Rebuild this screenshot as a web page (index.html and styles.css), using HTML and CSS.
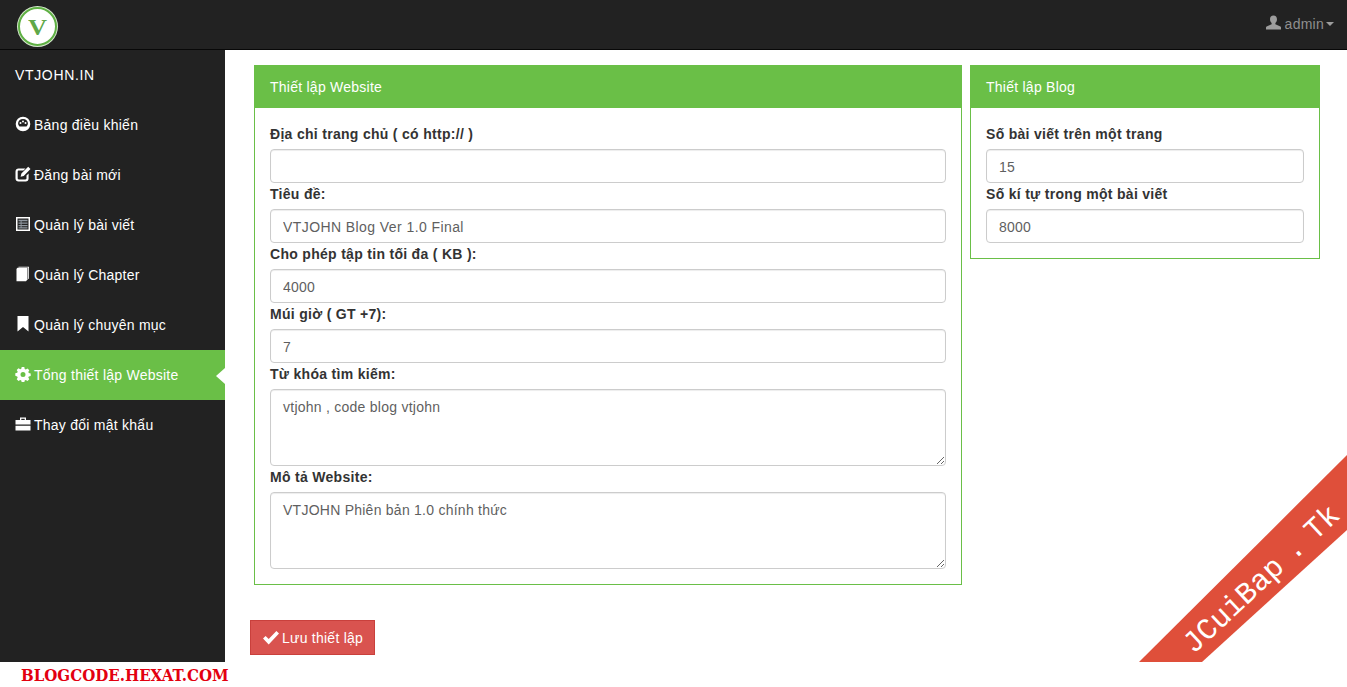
FILE: index.html
```html
<!DOCTYPE html>
<html lang="vi">
<head>
<meta charset="utf-8">
<title>Tổng thiết lập Website</title>
<link rel="stylesheet" href="styles.css">
</head>
<body>
<header class="topbar">
  <div class="logo"><span>V</span></div>
  <div class="user">
    <svg class="user-icon" viewBox="0 0 16 16"><path d="M8 0C5.600 0 4.300 1.700 4.300 4c0 1.700.7 3.200 1.700 4.100v1.300L.6 11.800C.2 12 0 12.400 0 12.800V15h16v-2.200c0-.4-.2-.8-.6-1L10 9.400V8.100C11 7.200 11.700 5.700 11.700 4 11.700 1.700 10.400 0 8 0z"/></svg>
    <span>admin</span><i class="caret"></i>
  </div>
</header>
<div class="shell">
  <nav class="sidebar">
    <a class="nav-item brand">VTJOHN.IN</a>
    <a class="nav-item">
      <svg class="ico" viewBox="0 0 16 16"><path fill-rule="evenodd" d="M8 .7a7.300 7.300 0 1 0 0 14.600A7.300 7.300 0 0 0 8 .7zM8 3c2.900 0 4.900 2 4.900 4.300 0 1.300-.6 2.400-1.400 3.200H4.500C3.700 9.700 3.100 8.600 3.100 7.300 3.100 5 5.100 3 8 3zM5.500 6a1 1 0 1 0 0 2 1 1 0 0 0 0-2zM8 4.600a1 1 0 1 0 0 2 1 1 0 0 0 0-2zM10.500 6a1 1 0 1 0 0 2 1 1 0 0 0 0-2z"/></svg>
      Bảng điều khiển</a>
    <a class="nav-item">
      <svg class="ico" viewBox="0 0 16 16"><path d="M3.500 2.500h7L8.400 4.600H3.800c-.7 0-1.100.4-1.100 1.100v6.600c0 .7.400 1.100 1.100 1.100h6.600c.7 0 1.100-.4 1.100-1.100V9.600l2.100-2.100v5c0 1.700-1.200 3-2.900 3H3.500c-1.700 0-3-1.300-3-3V5.500c0-1.700 1.300-3 3-3zM13.200.8l2.300 2.300-6.800 6.800-3.100.8.800-3.100z"/></svg>
      Đăng bài mới</a>
    <a class="nav-item">
      <svg class="ico" viewBox="0 0 16 16"><path fill-rule="evenodd" d="M1 1h14v14H1zM2.500 2.500v11h11v-11z"/><path class="grey" d="M3.500 3.800h9v1.400h-9zM3.500 6.500h9v1.300h-9zM3.500 9h9v1.300h-9zM3.500 11.300h9v1.300h-9zM5.600 3.800h1v8.800h-1z"/></svg>
      Quản lý bài viết</a>
    <a class="nav-item">
      <svg class="ico" viewBox="0 0 16 16"><path d="M3.500.8H14v12l-.8.2V1.600H3.500z" /><path d="M1.500 3.500C1.500 2.300 2.300 1.800 3.200 1.800h9.300v11.700L11 15.200H1.500z"/></svg>
      Quản lý Chapter</a>
    <a class="nav-item">
      <svg class="ico" viewBox="0 0 16 16"><path d="M2.500 0h11v15.500L8 11l-5.500 4.500z"/></svg>
      Quản lý chuyên mục</a>
    <a class="nav-item active">
      <svg class="ico" viewBox="0 0 16 16"><path fill-rule="evenodd" d="M6.700 1h2.600l.4 1.900 1.100.5 1.700-1 1.800 1.800-1 1.700.5 1.100 1.900.4v2.600l-1.900.4-.5 1.100 1 1.700-1.800 1.800-1.700-1-1.100.5-.4 1.900H6.700l-.4-1.900-1.100-.5-1.700 1-1.800-1.800 1-1.700-.5-1.100L.3 9.800V7.200l1.900-.4.5-1.100-1-1.700 1.800-1.800 1.700 1 1.100-.5zM8 5.900a2.500 2.500 0 1 0 0 5 2.500 2.500 0 0 0 0-5z"/></svg>
      Tổng thiết lập Website</a>
    <a class="nav-item">
      <svg class="ico" viewBox="0 0 16 16"><path fill-rule="evenodd" d="M5 1.500h6v2.500h4.500v4.500H.5V4H5zM6.300 2.700V4h3.400V2.700zM.5 9.700h15v4.800H.5z"/></svg>
      Thay đổi mật khẩu</a>
  </nav>
  <main class="content">
    <div class="panels">
      <section class="panel">
        <h2 class="panel-head">Thiết lập Website</h2>
        <div class="panel-body">
          <label class="label">Địa chỉ trang chủ ( có http:// )</label>
          <input class="field" type="text" value="">
          <label class="label">Tiêu đề:</label>
          <input class="field wide" type="text" value="VTJOHN Blog Ver 1.0 Final">
          <label class="label">Cho phép tập tin tối đa ( KB ):</label>
          <input class="field" type="text" value="4000">
          <label class="label">Múi giờ ( GT +7):</label>
          <input class="field" type="text" value="7">
          <label class="label">Từ khóa tìm kiếm:</label>
          <textarea class="field area">vtjohn , code blog vtjohn</textarea>
          <label class="label">Mô tả Website:</label>
          <textarea class="field area">VTJOHN Phiên bản 1.0 chính thức</textarea>
        </div>
      </section>
      <section class="panel">
        <h2 class="panel-head">Thiết lập Blog</h2>
        <div class="panel-body">
          <label class="label">Số bài viết trên một trang</label>
          <input class="field" type="text" value="15">
          <label class="label">Số kí tự trong một bài viết</label>
          <input class="field" type="text" value="8000">
        </div>
      </section>
    </div>
    <button class="save" type="button">
      <svg class="check" viewBox="0 0 16 14"><path d="M0 7.500 2.600 5l3.100 3.100L13.400 0 16 2.600 5.700 13.500z"/></svg>
      <span>Lưu thiết lập</span></button>
  </main>
</div>
<footer class="foot"><span>BLOGCODE.HEXAT.COM</span></footer>
<div class="ribbon"><span>JCuiBap . Tk</span></div>
</body>
</html>
```
FILE: styles.css
```css
* { box-sizing: border-box; }
html, body { height: 100%; }
body {
  margin: 0;
  height: 687px;
  overflow: hidden;
  background: #fff;
  color: #333;
  font: 14px/20px "Liberation Sans", Arial, sans-serif;
  letter-spacing: .25px;
  display: flex;
  flex-direction: column;
}
.topbar {
  height: 50px;
  flex: none;
  background: #222;
  border-bottom: 1px solid #080808;
  display: flex;
  align-items: center;
  justify-content: space-between;
  padding: 0 13px 0 18px;
}
.logo {
  width: 39px;
  height: 39px;
  margin-top: 3px;
  border-radius: 50%;
  background: #fff;
  border: 2px solid #5fb044;
  box-shadow: 0 0 0 1px #d5e8cd;
  display: flex;
  align-items: center;
  justify-content: center;
}
.logo span {
  font: bold 24px/1 "Liberation Serif", serif;
  color: #5fa848;
  margin-top: 1px;
  transform: scaleX(1.1);
}
.user {
  display: flex;
  align-items: center;
  color: #8f8f8f;
  margin-top: -2px;
}
.user-icon { width: 15px; height: 16px; fill: #9d9d9d; margin-right: 4px; margin-top: -2px; }
.caret {
  width: 0;
  height: 0;
  margin-left: 2px;
  border-top: 4px solid #9d9d9d;
  border-left: 4px solid transparent;
  border-right: 4px solid transparent;
}
.shell { display: flex; height: 612px; flex: none; }
.sidebar { width: 225px; flex: none; background: #222; }
.nav-item {
  position: relative;
  height: 50px;
  padding: 0 15px;
  display: flex;
  align-items: center;
  color: #fff;
}
.brand { letter-spacing: .65px; }
.ico { width: 16px; height: 16px; fill: #fff; margin-right: 3px; flex: none; margin-top: -2px; }
.ico .grey { fill: #8f97a0; }
.active { background: #6abf47; }
.active::after {
  content: "";
  position: absolute;
  right: 0;
  top: 18px;
  border-top: 8px solid transparent;
  border-bottom: 8px solid transparent;
  border-right: 9px solid #fff;
}
.content { flex: 1; padding: 15px 27px 0 25px; }
.panels {
  display: grid;
  grid-template-columns: 708px 350px;
  gap: 8px;
  align-items: start;
  margin-left: 4px;
}
.panel { border: 1px solid #6abf47; border-top: 0; }
.panel-head {
  margin: 0 -1px;
  height: 43px;
  padding: 1px 16px 0;
  background: #6abf47;
  color: #fff;
  font-size: 14px;
  font-weight: normal;
  line-height: 42px;
}
.panel-body { padding: 16px 15px 15px; }
.label {
  display: block;
  font-weight: bold;
  height: 20px;
  margin: 1px 0 5px;
  color: #333;
  letter-spacing: .3px;
}
.panel-body .label:first-child { margin-top: 0; }
.field {
  display: block;
  width: 100%;
  height: 34px;
  padding: 7px 12px 5px;
  background: #fff;
  border: 1px solid #ccc;
  border-radius: 4px;
  box-shadow: inset 0 1px 1px rgba(0,0,0,.075);
  color: #5f5f5f;
  font: 14px/20px "Liberation Sans", Arial, sans-serif;
  letter-spacing: .25px;
}
.wide { letter-spacing: .42px; }
.area { height: 77px; }
.save {
  display: flex;
  align-items: center;
  gap: 3px;
  width: 125px;
  height: 35px;
  margin-top: 35px;
  padding: 0 12px;
  background: #d9534f;
  border: 1px solid #c9403c;
  color: #fff;
  font: 14px/20px "Liberation Sans", Arial, sans-serif;
  letter-spacing: .25px;
  white-space: nowrap;
}
.check { width: 16px; height: 14px; fill: #fff; flex: none; }
.foot {
  flex: 1;
  padding: 3px 0 0 21px;
}
.foot span {
  display: inline-block;
  font: bold 17px/20px "DejaVu Serif", serif;
  letter-spacing: 0;
  color: #e3000f;
  transform: scaleX(.884);
  transform-origin: left center;
  white-space: nowrap;
}
.ribbon {
  position: absolute;
  left: 1139px;
  top: 455px;
  width: 208px;
  height: 207px;
  background: #df4f3a;
  clip-path: polygon(208px 0, 208px 75px, 63px 207px, 0 207px);
}
.ribbon span {
  position: absolute;
  left: 18px;
  top: 105px;
  width: 210px;
  text-align: center;
  transform: rotate(-43deg);
  color: #fff;
  font: 30px/40px "Liberation Mono", monospace;
  letter-spacing: 0;
  word-spacing: -7px;
  white-space: nowrap;
}
```
